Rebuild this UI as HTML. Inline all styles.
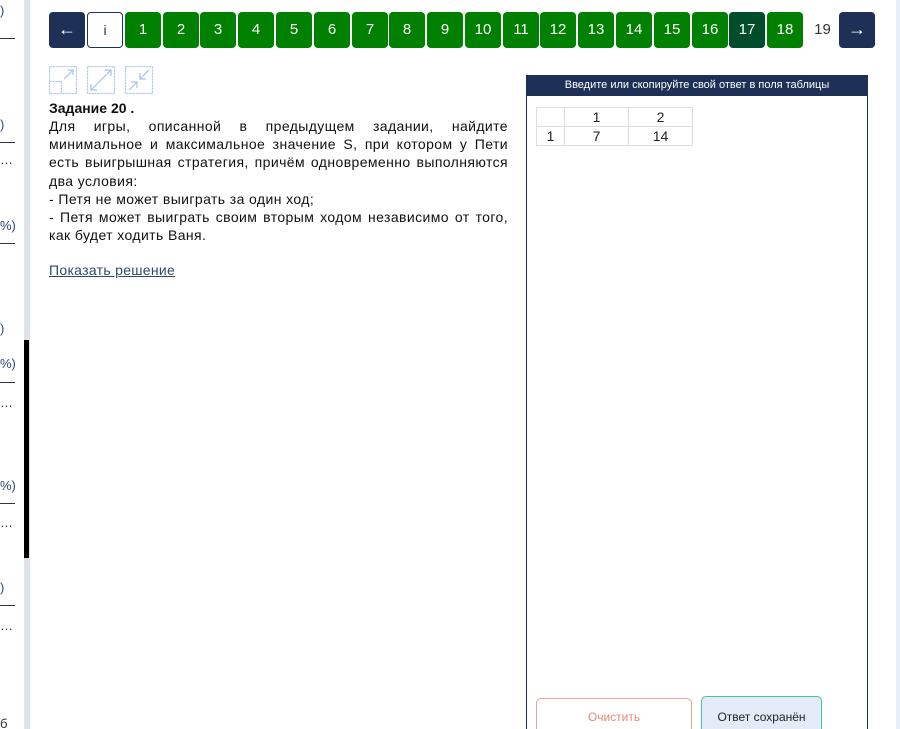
<!DOCTYPE html>
<html><head><meta charset="utf-8"><style>
*{margin:0;padding:0;box-sizing:border-box}
html,body{width:900px;height:729px;overflow:hidden}
body{background:#fff;font-family:"Liberation Sans","DejaVu Sans",sans-serif;position:relative;color:#111}
.a{position:absolute}
.b{position:absolute;top:12px;width:36px;height:36px;border-radius:4px;background:#008000;color:#fff;font-size:15px;text-align:center;line-height:36px}
.sl{position:absolute;left:0;font-size:13px;color:#2a4a7a}
.ln{position:absolute;left:0;width:15px;height:1px;background:#334}
.t{position:absolute;left:49px;width:459px;font-size:14px;line-height:18.2px;color:#111;letter-spacing:0.4px}
.t div{white-space:nowrap}
.j{text-align:justify;text-align-last:justify}
td{border:1px solid #ddd;font-size:14px;text-align:center;height:19px;padding:0;color:#222}
</style></head><body>
<div class="a" style="left:24px;top:0;width:6px;height:729px;background:#dfe2e8"></div>
<div class="a" style="left:24px;top:340px;width:5px;height:218px;background:#000"></div>
<div class="a" style="left:896px;top:0;width:4px;height:729px;background:#e8eef7"></div>
<div class="sl" style="top:3px">)</div><div class="ln" style="top:38px"></div>
<div class="sl" style="top:117px">)</div><div class="ln" style="top:142px"></div><div class="sl" style="top:152px;color:#333">…</div>
<div class="sl" style="top:218px">%)</div><div class="ln" style="top:243px"></div>
<div class="sl" style="top:321px">)</div>
<div class="sl" style="top:356px">%)</div><div class="ln" style="top:382px"></div><div class="sl" style="top:395px;color:#333">…</div>
<div class="sl" style="top:478px">%)</div><div class="ln" style="top:503px"></div><div class="sl" style="top:515px;color:#333">…</div>
<div class="sl" style="top:580px">)</div><div class="ln" style="top:605px"></div><div class="sl" style="top:618px;color:#333">…</div>
<div class="sl" style="top:716px;color:#333">б</div>

<div class="b" style="left:49px;background:#1e3055;font-size:18px;line-height:34px">←</div>
<div class="b" style="left:87px;background:#fff;border:1px solid #1e3055;color:#1e3055;line-height:34px;font-size:14px">i</div>
<div class="b" style="left:125px">1</div><div class="b" style="left:163px">2</div><div class="b" style="left:200px">3</div><div class="b" style="left:238px">4</div><div class="b" style="left:276px">5</div><div class="b" style="left:314px">6</div><div class="b" style="left:352px">7</div><div class="b" style="left:389px">8</div><div class="b" style="left:427px">9</div><div class="b" style="left:465px">10</div><div class="b" style="left:503px">11</div><div class="b" style="left:540px">12</div><div class="b" style="left:578px">13</div><div class="b" style="left:616px">14</div><div class="b" style="left:654px">15</div><div class="b" style="left:692px">16</div><div class="b" style="left:729px;background:#004d2c">17</div><div class="b" style="left:767px">18</div>
<div class="a" style="left:806px;top:12px;width:33px;line-height:36px;text-align:center;font-size:15px;color:#333">19</div>
<div class="b" style="left:839px;background:#1e3055;font-size:18px;line-height:34px">→</div>

<svg class="a" style="left:49px;top:66px" width="105" height="29" viewBox="0 0 105 29" fill="none" stroke="#a9c2e6" stroke-width="1.2">
<rect x="0.5" y="0.5" width="27" height="27" stroke-dasharray="2 1"/><path d="M0.5 15.5h12v12" stroke-dasharray="2 1"/><path d="M15 13l9-9M19 4h5v5"/>
<rect x="38.5" y="0.5" width="27" height="27" stroke-dasharray="2 1"/><path d="M42 24l20-20M56 4h6v6M42 18v6h6"/>
<rect x="76.5" y="0.5" width="27" height="27" stroke-dasharray="2 1"/><path d="M100 4l-9 9M91 7v6h6M80 24l8-8M82 16h6v6"/>
</svg>
<div class="t" style="top:99px;font-weight:bold;letter-spacing:0">Задание 20 .</div>
<div class="t" style="top:117px">
<div class="j">Для игры, описанной в предыдущем задании, найдите</div>
<div class="j">минимальное и максимальное значение S, при котором у Пети</div>
<div class="j">есть выигрышная стратегия, причём одновременно выполняются</div>
<div>два условия:</div>
<div>- Петя не может выиграть за один ход;</div>
<div class="j">- Петя может выиграть своим вторым ходом независимо от того,</div>
<div>как будет ходить Ваня.</div>
</div>
<div class="t" style="top:261px;color:#2a4a6a;text-decoration:underline;letter-spacing:0.3px">Показать решение</div>

<div class="a" style="left:526px;top:75px;width:342px;height:660px;border:1px solid #1e3055;border-top:none"></div>
<div class="a" style="left:526px;top:75px;width:342px;height:21px;background:#1e3055;color:#fff;font-size:11px;text-align:center;line-height:21px">Введите или скопируйте свой ответ в поля таблицы</div>
<table class="a" style="left:536px;top:107px;border-collapse:collapse;width:157px">
<tr><td style="width:28px"></td><td style="width:64px">1</td><td>2</td></tr>
<tr><td>1</td><td>7</td><td>14</td></tr></table>
<div class="a" style="left:536px;top:698px;width:156px;height:40px;border:1px solid #e8a29a;border-radius:5px;color:#e8877a;font-size:12px;text-align:center;line-height:36px">Очистить</div>
<div class="a" style="left:701px;top:696px;width:121px;height:42px;border:1px solid #3cc7a8;border-radius:5px;background:#e4ebf6;color:#222;font-size:12px;text-align:center;line-height:40px">Ответ сохранён</div>
</body></html>
